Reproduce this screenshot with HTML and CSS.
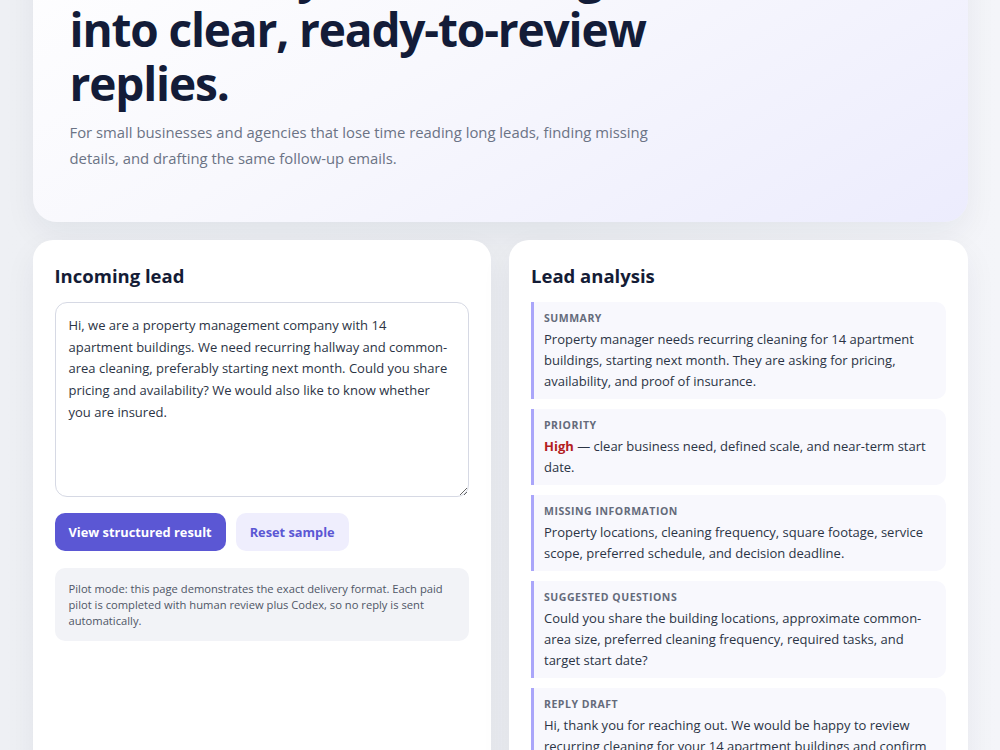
FILE: index.html
```html
<!DOCTYPE html>
<html lang="en">
<head>
<meta charset="utf-8">
<title>Lead replies pilot</title>
<link rel="stylesheet" href="styles.css">
</head>
<body>
<div class="page">
  <header class="hero">
    <h1 class="hero-title">Turn messy lead messages into clear, ready-to-review replies.</h1>
    <p class="hero-lede">For small businesses and agencies that lose time reading long leads, finding missing details, and drafting the same follow-up emails.</p>
  </header>

  <main class="workspace">
    <section class="card">
      <h2 class="card-title">Incoming lead</h2>
      <textarea class="lead-input" spellcheck="false">Hi, we are a property management company with 14 apartment buildings. We need recurring hallway and common-area cleaning, preferably starting next month. Could you share pricing and availability? We would also like to know whether you are insured.</textarea>
      <div class="actions">
        <button class="btn btn-primary" type="button">View structured result</button>
        <button class="btn btn-secondary" type="button">Reset sample</button>
      </div>
      <p class="note">Pilot mode: this page demonstrates the exact delivery format. Each paid pilot is completed with human review plus Codex, so no reply is sent automatically.</p>
    </section>

    <section class="card">
      <h2 class="card-title">Lead analysis</h2>
      <div class="blocks">
        <div class="block">
          <div class="block-label">Summary</div>
          <p class="block-text">Property manager needs recurring cleaning for 14 apartment buildings, starting next month. They are asking for pricing, availability, and proof of insurance.</p>
        </div>
        <div class="block">
          <div class="block-label">Priority</div>
          <p class="block-text"><strong class="priority-high">High</strong> — clear business need, defined scale, and near-term start date.</p>
        </div>
        <div class="block">
          <div class="block-label">Missing information</div>
          <p class="block-text">Property locations, cleaning frequency, square footage, service scope, preferred schedule, and decision deadline.</p>
        </div>
        <div class="block">
          <div class="block-label">Suggested questions</div>
          <p class="block-text">Could you share the building locations, approximate common-area size, preferred cleaning frequency, required tasks, and target start date?</p>
        </div>
        <div class="block">
          <div class="block-label">Reply draft</div>
          <p class="block-text">Hi, thank you for reaching out. We would be happy to review recurring cleaning for your 14 apartment buildings and confirm pricing, availability, and insurance details. To prepare an accurate quote, could you share the building locations and your preferred schedule?</p>
        </div>
      </div>
    </section>
  </main>
</div>
</body>
</html>
```

FILE: styles.css
```css
* {
  box-sizing: border-box;
}

html, body {
  margin: 0;
  padding: 0;
}

body {
  font-family: "Open Sans", "Noto Sans", "DejaVu Sans", sans-serif;
  color: #2b3445;
  background: linear-gradient(90deg, #eef0f4 0%, #eceef2 55%, #f4f5f9 100%);
  min-height: 100vh;
}

.page {
  width: 935px;
  margin: 0 auto;
  padding-bottom: 40px;
}

.hero {
  margin-top: -96px;
  padding: 44px 37px 51px;
  border-radius: 24px;
  background: linear-gradient(150deg, #ffffff 0%, #f8f8fd 45%, #ececfd 100%);
  box-shadow: 0 12px 32px rgba(20, 28, 60, 0.06);
}

.hero-title {
  margin: 0;
  max-width: 640px;
  font-size: 46px;
  line-height: 54px;
  font-weight: 700;
  letter-spacing: -0.025em;
  color: #131c38;
}

.hero-lede {
  margin: 9px 0 0;
  max-width: 600px;
  font-size: 14.85px;
  line-height: 26px;
  color: #6b7385;
}

.workspace {
  margin-top: 18px;
  display: grid;
  grid-template-columns: 1fr 1fr;
  gap: 18px;
}

.card {
  background: #ffffff;
  border-radius: 20px;
  padding: 22px;
  box-shadow: 0 12px 32px rgba(20, 28, 60, 0.06);
}

.card-title {
  margin: 0 0 12px;
  font-size: 18.5px;
  line-height: 28px;
  font-weight: 700;
  color: #141c36;
}

.lead-input {
  display: block;
  width: 100%;
  height: 195px;
  margin: 0;
  padding: 12px 18px 12px 13px;
  border: 1px solid #d6d9e4;
  border-radius: 12px;
  font-family: inherit;
  font-size: 13px;
  line-height: 21.7px;
  color: #2b3445;
  background: #ffffff;
  resize: vertical;
}

.actions {
  display: flex;
  gap: 10px;
  margin-top: 16px;
}

.btn {
  height: 38px;
  padding: 0 14px;
  border: 0;
  border-radius: 10px;
  font-family: inherit;
  font-size: 12.8px;
  font-weight: 700;
  cursor: pointer;
}

.btn-primary {
  background: #5b57d4;
  color: #ffffff;
}

.btn-secondary {
  background: #efeefd;
  color: #5b57d4;
}

.note {
  margin: 17px 0 0;
  padding: 13px 14px 12px;
  background: #f2f3f7;
  border-radius: 10px;
  font-size: 11.2px;
  line-height: 16px;
  color: #4f5666;
}

.blocks {
  display: flex;
  flex-direction: column;
  gap: 10px;
}

.block {
  background: #f8f8fd;
  border-left: 3px solid #aaa6fa;
  border-radius: 0 10px 10px 0;
  padding: 8px 12px 7px 10px;
}

.block-label {
  font-size: 10.5px;
  line-height: 16px;
  font-weight: 700;
  letter-spacing: 0.05em;
  text-transform: uppercase;
  color: #656b7b;
  margin-bottom: 3px;
}

.block-text {
  margin: 0;
  font-size: 13px;
  line-height: 21px;
  color: #2b3445;
}

.priority-high {
  color: #b3201f;
  font-weight: 700;
}
```
